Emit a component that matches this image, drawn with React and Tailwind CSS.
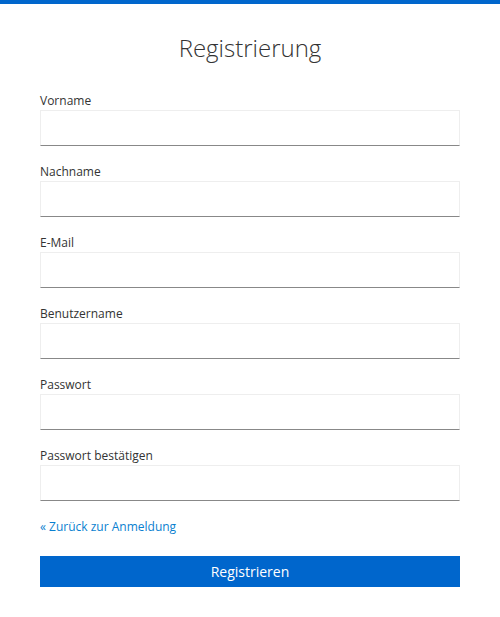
const fields = [
  "Vorname",
  "Nachname",
  "E-Mail",
  "Benutzername",
  "Passwort",
  "Passwort bestätigen",
];

const App = () => {
  return (
    <div className="min-h-screen bg-white font-['Open_Sans',sans-serif] text-[#333]">
      <div className="h-[4px] bg-[#0066cc]"></div>
      <div className="px-10">
        <h1 className="text-center text-[24px] font-light leading-[36px] pt-[26px] pb-[25px]">
          Registrierung
        </h1>
        <form>
          {fields.map((name) => (
            <div key={name} className="flex flex-col mb-[16px]">
              <label className="text-[12px] leading-[18px] pt-[1px]">{name}</label>
              <input
                className="h-[36px] border border-[#eeeeee] border-b-[#888888] outline-none px-2"
                type={name.startsWith("Passwort") ? "password" : "text"}
              />
            </div>
          ))}
          <div className="pt-[1px] pb-[20px]">
            <a href="#" className="block text-[12px] leading-[18px] text-[#0a7fd0]">
              « Zurück zur Anmeldung
            </a>
          </div>
          <button
            type="button"
            className="block w-full h-[31px] bg-[#0066cc] text-white text-[14px]"
          >
            Registrieren
          </button>
        </form>
      </div>
    </div>
  );
};

export default App;
